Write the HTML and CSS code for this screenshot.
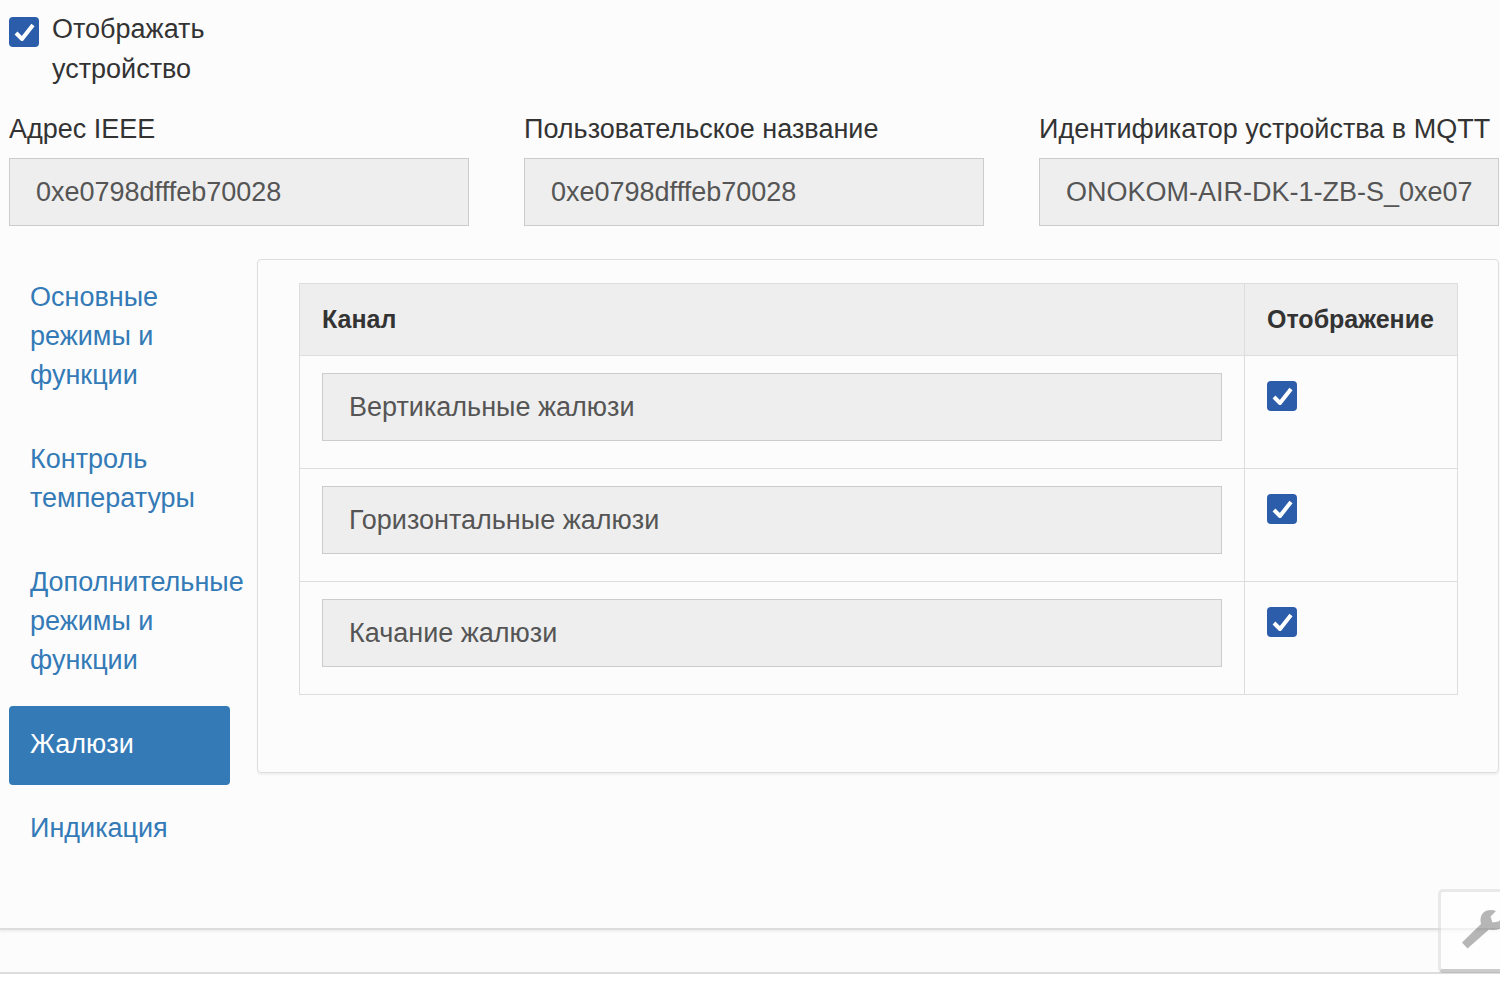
FILE: index.html
```html
<!DOCTYPE html>
<html lang="ru">
  <head>
    <meta charset="UTF-8" />
    <meta name="viewport" content="width=device-width, initial-scale=1.0" />
    <link rel="stylesheet" href="styles.css">
    <title>Настройки устройства</title>
  </head>
  <body>
    <div class="page">
      <form class="device">
        <label class="device-visible">
          <input type="checkbox" class="checkbox" checked />
          <span>Отображать устройство</span>
        </label>

        <div class="fields">
          <div class="field">
            <label for="ieee">Адрес IEEE</label>
            <input type="text" class="form-control" id="ieee" value="0xe0798dfffeb70028" disabled />
          </div>
          <div class="field">
            <label for="name">Пользовательское название</label>
            <input type="text" class="form-control" id="name" value="0xe0798dfffeb70028" disabled />
          </div>
          <div class="field">
            <label for="mqtt">Идентификатор устройства в MQTT</label>
            <input type="text" class="form-control" id="mqtt" value="ONOKOM-AIR-DK-1-ZB-S_0xe0798dfffeb70028" disabled />
          </div>
        </div>

        <div class="groups">
          <nav class="tabs">
            <a href="#main">Основные режимы и функции</a>
            <a href="#temperature">Контроль температуры</a>
            <a href="#extra">Дополнительные режимы и функции</a>
            <a href="#louvers" class="active">Жалюзи</a>
            <a href="#indication">Индикация</a>
          </nav>

          <div class="panel">
            <table class="channels">
              <thead>
                <tr>
                  <th>Канал</th>
                  <th class="channel-visible">Отображение</th>
                </tr>
              </thead>
              <tbody>
                <tr>
                  <td><input type="text" class="form-control" aria-label="Канал" value="Вертикальные жалюзи" disabled /></td>
                  <td><input type="checkbox" class="checkbox" aria-label="Отображение" checked /></td>
                </tr>
                <tr>
                  <td><input type="text" class="form-control" aria-label="Канал" value="Горизонтальные жалюзи" disabled /></td>
                  <td><input type="checkbox" class="checkbox" aria-label="Отображение" checked /></td>
                </tr>
                <tr>
                  <td><input type="text" class="form-control" aria-label="Канал" value="Качание жалюзи" disabled /></td>
                  <td><input type="checkbox" class="checkbox" aria-label="Отображение" checked /></td>
                </tr>
              </tbody>
            </table>
          </div>
        </div>
      </form>
    </div>

    <button type="button" class="tools" aria-label="Инструменты">
      <svg viewBox="0 0 44 42" width="44" height="42">
        <path fill="#888" d="M3 32.500 L22 14 C20 6 24 0 32 0 Q35 0 37 1 L31.500 6.500 L33.500 12.500 L39.500 11.500 L44 7 V17 Q40 20 34 20 Q32 20 30 19.500 L8.500 38.500 Z" />
      </svg>
    </button>
  </body>
</html>
```

FILE: styles.css
```css
* {
  box-sizing: border-box;
}

body {
  margin: 0;
  background-color: #fff;
  color: #333;
  font-family: "Liberation Sans", Arial, sans-serif;
  font-size: 27px;
  line-height: 40px;
  overflow-x: hidden;
}

.page {
  padding-bottom: 42px;
  border-bottom: 2px solid #ddd;
  background-color: #fcfcfc;
  box-shadow: 0 2px 2px rgba(0, 0, 0, 0.05);
}

.device {
  padding: 9px 1px 59px 9px;
  border-bottom: 2px solid #ddd;
  box-shadow: 0 2px 2px rgba(0, 0, 0, 0.05);
}

.device-visible {
  display: flex;
  width: 230px;
  gap: 13px;
}

.checkbox {
  appearance: none;
  flex: none;
  display: block;
  width: 30px;
  height: 30px;
  margin: 8px 0 0;
  border-radius: 4px;
  background: #2b5dab url("data:image/svg+xml,%3Csvg xmlns='http://www.w3.org/2000/svg' viewBox='0 0 30 30'%3E%3Cpath d='M7 16l6 6L24 8' fill='none' stroke='white' stroke-width='4' stroke-linejoin='round'/%3E%3C/svg%3E");
}

.fields {
  display: grid;
  grid-template-columns: repeat(3, minmax(0, 1fr));
  gap: 55px;
  margin-top: 20px;
}

.field label {
  display: block;
  margin-bottom: 9px;
  white-space: nowrap;
}

.form-control {
  display: block;
  width: 100%;
  height: 68px;
  padding: 0 26px;
  border: 1px solid #ccc;
  border-radius: 0;
  background-color: #eee;
  color: #555;
  font: inherit;
}

.groups {
  display: flex;
  align-items: flex-start;
  gap: 27px;
  margin-top: 33px;
}

.tabs {
  display: flex;
  flex: none;
  flex-direction: column;
  gap: 5px;
  width: 221px;
  line-height: 39px;
}

.tabs a {
  padding: 19px 21px 21px;
  border-radius: 4px;
  color: #337ab7;
  text-decoration: none;
}

.tabs a.active {
  background-color: #337ab7;
  color: #fff;
}

.panel {
  flex: 1;
  padding: 23px 40px 77px 41px;
  border: 1px solid #ddd;
  border-radius: 4px;
  box-shadow: 0 2px 2px rgba(0, 0, 0, 0.05);
}

.channels {
  width: 100%;
  border-collapse: collapse;
}

.channels th {
  padding: 15px 22px 16px;
  border: 1px solid #ddd;
  background-color: #eee;
  font-size: 25px;
  text-align: left;
}

.channels td {
  padding: 17px 22px 27px;
  border: 1px solid #ddd;
  vertical-align: top;
}

.channels .channel-visible {
  width: 213px;
}

.tools {
  position: fixed;
  right: -24px;
  bottom: 30px;
  width: 86px;
  height: 84px;
  padding: 0 18px;
  border: 3px solid #ddd;
  border-bottom: 4px solid #aaa;
  border-radius: 5px;
  background-color: #fff;
  opacity: 0.6;
}

.tools svg {
  display: block;
}
```
